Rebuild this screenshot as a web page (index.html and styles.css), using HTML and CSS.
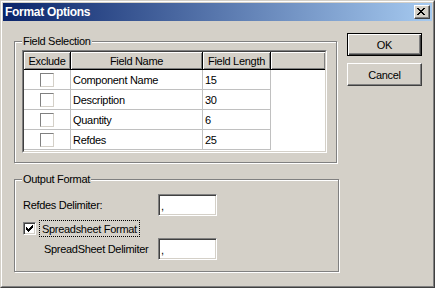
FILE: index.html
```html
<!DOCTYPE html>
<html lang="en">
<head>
    <meta charset="UTF-8">
    <title>Format Options</title>
    <link rel="stylesheet" href="styles.css">
</head>
<body>
    <div class="window">
        <div class="frame">
            <div class="titlebar">
                <span class="title">Format Options</span>
                <button class="caption-btn" aria-label="Close">
                    <svg width="8" height="7" viewBox="0 0 8 7" shape-rendering="crispEdges">
                        <path fill="#000" d="M0 0h2v1H0z M6 0h2v1H6z M1 1h2v1H1z M5 1h2v1H5z M2 2h4v1H2z M3 3h2v1H3z M2 4h4v1H2z M1 5h2v1H1z M5 5h2v1H5z M0 6h2v1H0z M6 6h2v1H6z"/>
                    </svg>
                </button>
            </div>

            <div class="dialog">
                <div class="panels">
                    <fieldset class="group group-fields">
                        <legend>Field Selection</legend>
                        <div class="grid">
                            <div class="grid-inner">
                                <div class="grid-head">
                                    <div class="hcell col-excl">Exclude</div>
                                    <div class="hcell col-name">Field Name</div>
                                    <div class="hcell col-len">Field Length</div>
                                    <div class="hcell col-fill"></div>
                                </div>
                                <div class="grid-row">
                                    <div class="cell col-excl"><span class="cb-flat"></span></div>
                                    <div class="cell col-name">Component Name</div>
                                    <div class="cell col-len">15</div>
                                </div>
                                <div class="grid-row">
                                    <div class="cell col-excl"><span class="cb-flat"></span></div>
                                    <div class="cell col-name">Description</div>
                                    <div class="cell col-len">30</div>
                                </div>
                                <div class="grid-row">
                                    <div class="cell col-excl"><span class="cb-flat"></span></div>
                                    <div class="cell col-name">Quantity</div>
                                    <div class="cell col-len">6</div>
                                </div>
                                <div class="grid-row">
                                    <div class="cell col-excl"><span class="cb-flat"></span></div>
                                    <div class="cell col-name">Refdes</div>
                                    <div class="cell col-len">25</div>
                                </div>
                            </div>
                        </div>
                    </fieldset>

                    <fieldset class="group group-output">
                        <legend>Output Format</legend>
                        <div class="form-row">
                            <span class="field-label">Refdes Delimiter:</span>
                            <span class="edit">,</span>
                        </div>
                        <div class="form-row check-row">
                            <span class="checkbox">
                                <svg width="7" height="7" viewBox="0 0 7 7" shape-rendering="crispEdges">
                                    <path fill="#000" d="M6 0h1v1H6z M5 1h2v1H5z M0 2h1v1H0z M4 2h3v1H4z M0 3h2v1H0z M3 3h3v1H3z M0 4h5v1H0z M1 5h3v1H1z M2 6h1v1H2z"/>
                                </svg>
                            </span>
                            <span class="focus-label">Spreadsheet Format</span>
                        </div>
                        <div class="form-row sub-row">
                            <span class="field-label indent">SpreadSheet Delimiter</span>
                            <span class="edit">,</span>
                        </div>
                    </fieldset>
                </div>

                <div class="buttons">
                    <button class="btn btn-default">OK</button>
                    <button class="btn">Cancel</button>
                </div>
            </div>
        </div>
    </div>
</body>
</html>
```

FILE: styles.css
```css
body {
    margin: 0;
    background-color: #d4d0c8;
    font-family: "Liberation Sans", Arial, sans-serif;
    font-size: 11px;
    letter-spacing: -0.3px;
    color: #000;
}

.window {
    width: 435px;
    height: 288px;
    box-sizing: border-box;
    border: 1px solid;
    border-color: #d4d0c8 #404040 #404040 #d4d0c8;
}

.frame {
    height: 100%;
    box-sizing: border-box;
    border: 1px solid;
    border-color: #fff #808080 #808080 #fff;
    padding: 1px;
}

/* title bar */
.titlebar {
    height: 18px;
    display: flex;
    align-items: center;
    justify-content: space-between;
    padding: 0 2px;
    background: linear-gradient(to right, #0a246a, #a6caf0);
}

.title {
    color: #fff;
    font-weight: bold;
    font-size: 12px;
}

.caption-btn {
    width: 16px;
    height: 14px;
    box-sizing: border-box;
    padding: 2px 0 0 2px;
    display: flex;
    align-items: flex-start;
    background-color: #d4d0c8;
    border: 1px solid;
    border-color: #fff #404040 #404040 #fff;
    box-shadow: inset -1px -1px 0 #808080;
}

.caption-btn svg {
    display: block;
}

/* dialog body */
.dialog {
    display: flex;
    align-items: flex-start;
    padding: 12px 0 0 11px;
}

.panels {
    margin-top: 2px;
}

.group {
    margin: 0;
    min-width: 0;
    box-sizing: border-box;
    border: 1px solid #808080;
    box-shadow: inset 1px 1px 0 #fff, 1px 1px 0 #fff;
}

.group legend {
    padding: 0 1px;
    line-height: 13px;
    background-color: #d4d0c8;
}

.group-fields {
    width: 323px;
    padding: 2px 9px 9px 7px;
}

.group-output {
    width: 325px;
    margin-top: 10px;
    padding: 8px 9px 11px 7px;
}

/* list grid */
.grid {
    width: 305px;
    height: 103px;
    box-sizing: border-box;
    border: 1px solid;
    border-color: #808080 #fff #fff #808080;
}

.grid-inner {
    height: 100%;
    box-sizing: border-box;
    border: 1px solid;
    border-color: #404040 #d4d0c8 #d4d0c8 #404040;
    background-color: #fff;
}

.grid-head,
.grid-row {
    display: flex;
}

.hcell {
    height: 18px;
    box-sizing: border-box;
    display: flex;
    align-items: center;
    justify-content: center;
    background-color: #d4d0c8;
    border-right: 1px solid #000;
    border-bottom: 1px solid #000;
    box-shadow: inset 1px 1px 0 #fff, inset -1px -1px 0 #808080;
}

.col-excl { width: 47px; }
.col-name { width: 132px; }
.col-len { width: 68px; }

.hcell.col-fill {
    flex: 1;
    border-right: none;
}

.cell {
    height: 20px;
    box-sizing: border-box;
    display: flex;
    align-items: center;
    padding: 1px 0 0 2px;
    border-right: 1px solid #c0c0c0;
    border-bottom: 1px solid #c0c0c0;
}

.cell.col-excl {
    justify-content: center;
    padding: 0 1px 0 0;
}

.cb-flat {
    width: 14px;
    height: 14px;
    box-sizing: border-box;
    border: 1px solid;
    border-color: #808080 #d4d0c8 #d4d0c8 #808080;
    background-color: #fff;
}

/* output format */
.form-row {
    display: flex;
    align-items: center;
    height: 22px;
    padding-left: 1px;
}

.check-row {
    height: 17px;
    margin-top: 4px;
}

.sub-row {
    margin-top: 1px;
}

.field-label {
    width: 135px;
    box-sizing: border-box;
}

.field-label.indent {
    padding-left: 21px;
}

.edit {
    width: 59px;
    height: 22px;
    box-sizing: border-box;
    padding: 4px 0 0 2px;
    line-height: 15px;
    background-color: #fff;
    border: 1px solid;
    border-color: #808080 #fff #fff #808080;
    box-shadow: inset 1px 1px 0 #404040, inset -1px -1px 0 #d4d0c8;
}

.checkbox {
    width: 13px;
    height: 13px;
    box-sizing: border-box;
    display: flex;
    padding: 2px 0 0 2px;
    background-color: #fff;
    border: 1px solid;
    border-color: #808080 #fff #fff #808080;
    box-shadow: inset 1px 1px 0 #404040, inset -1px -1px 0 #d4d0c8;
}

.checkbox svg {
    display: block;
}

.focus-label {
    margin-left: 3px;
    height: 17px;
    box-sizing: border-box;
    display: flex;
    align-items: center;
    padding: 0 2px;
    border: 1px dotted #000;
}

/* buttons */
.buttons {
    display: flex;
    flex-direction: column;
    gap: 7px;
    margin-left: 8px;
}

.btn {
    width: 75px;
    height: 23px;
    padding: 0;
    font-family: inherit;
    font-size: 11px;
    letter-spacing: inherit;
    color: #000;
    background-color: #d4d0c8;
    border: 1px solid;
    border-color: #fff #404040 #404040 #fff;
    box-shadow: inset -1px -1px 0 #808080;
}

.btn-default {
    border: 1px solid #000;
    box-shadow: inset 1px 1px 0 #fff, inset -1px -1px 0 #404040, inset -2px -2px 0 #808080;
}
```
